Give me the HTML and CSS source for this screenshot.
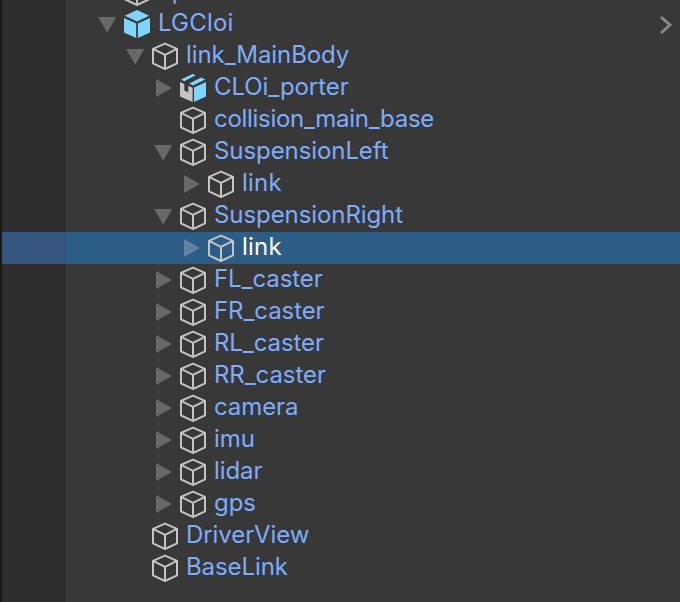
FILE: index.html
```html
<!DOCTYPE html>
<html lang="en">
<head>
<meta charset="utf-8">
<title>Hierarchy</title>
<link rel="stylesheet" href="styles.css">
</head>
<body>
<svg class="defs" aria-hidden="true">
  <symbol id="down" viewBox="0 0 24 32"><path d="M1.2 9H19.2L10.2 24.8Z"/></symbol>
  <symbol id="right" viewBox="0 0 24 32"><path d="M3 7V25L18.8 16Z"/></symbol>
  <symbol id="cube" viewBox="0 0 32 32"><path d="M16 3.7L28 8.8V23.4L16 29L4 23.4V8.8ZM4 8.8L16 14.9L28 8.8M16 14.9V29" fill="none" stroke="#c4c4c4" stroke-width="2" stroke-linejoin="round"/></symbol>
  <symbol id="prefab" viewBox="0 0 32 32"><path d="M16 2L28.2 7.8L16 13.4L3.8 7.8ZM3 10L15.2 15.6V30L3 24.6ZM29 10L16.9 15.6V30L29 24.6Z" fill="#7fd6fd"/></symbol>
  <symbol id="model" viewBox="0 0 32 32"><path d="M3 10L7.3 12V18.6L11.3 20.2V13.8L15.6 15.7V30L3 24.6Z" fill="#c4c4c4"/><path d="M29 10L17 15.6V30L29 24.6ZM4 7.6L15.6 2L18.7 3.3L7.3 9.2ZM12.2 11.6L24.3 5.6L28.3 7.6L16 13.4Z" fill="#7fd6fd"/></symbol>
</svg>
<main class="tree">
  <div class="row l0"><svg class="arrow"></svg><svg class="icon"><use href="#cube"/></svg><span>cp</span></div>
  <div class="row l0"><svg class="arrow"><use href="#down"/></svg><svg class="icon"><use href="#prefab"/></svg><span class="wide">LGCloi</span><svg class="chevron" viewBox="0 0 16 24"><path d="M3 4L12 12L3 20"/></svg></div>
  <div class="row l1"><svg class="arrow"><use href="#down"/></svg><svg class="icon"><use href="#cube"/></svg><span>link_MainBody</span></div>
  <div class="row l2"><svg class="arrow"><use href="#right"/></svg><svg class="icon"><use href="#model"/></svg><span>CLOi_porter</span></div>
  <div class="row l2"><svg class="arrow"></svg><svg class="icon"><use href="#cube"/></svg><span class="tight">collision_main_base</span></div>
  <div class="row l2"><svg class="arrow"><use href="#down"/></svg><svg class="icon"><use href="#cube"/></svg><span>SuspensionLeft</span></div>
  <div class="row l3"><svg class="arrow"><use href="#right"/></svg><svg class="icon"><use href="#cube"/></svg><span class="wide">link</span></div>
  <div class="row l2"><svg class="arrow"><use href="#down"/></svg><svg class="icon"><use href="#cube"/></svg><span>SuspensionRight</span></div>
  <div class="row l3 selected"><svg class="arrow"><use href="#right"/></svg><svg class="icon"><use href="#cube"/></svg><span class="wide">link</span></div>
  <div class="row l2"><svg class="arrow"><use href="#right"/></svg><svg class="icon"><use href="#cube"/></svg><span>FL_caster</span></div>
  <div class="row l2"><svg class="arrow"><use href="#right"/></svg><svg class="icon"><use href="#cube"/></svg><span>FR_caster</span></div>
  <div class="row l2"><svg class="arrow"><use href="#right"/></svg><svg class="icon"><use href="#cube"/></svg><span>RL_caster</span></div>
  <div class="row l2"><svg class="arrow"><use href="#right"/></svg><svg class="icon"><use href="#cube"/></svg><span>RR_caster</span></div>
  <div class="row l2"><svg class="arrow"><use href="#right"/></svg><svg class="icon"><use href="#cube"/></svg><span>camera</span></div>
  <div class="row l2"><svg class="arrow"><use href="#right"/></svg><svg class="icon"><use href="#cube"/></svg><span>imu</span></div>
  <div class="row l2"><svg class="arrow"><use href="#right"/></svg><svg class="icon"><use href="#cube"/></svg><span>lidar</span></div>
  <div class="row l2"><svg class="arrow"><use href="#right"/></svg><svg class="icon"><use href="#cube"/></svg><span>gps</span></div>
  <div class="row l1"><svg class="arrow"></svg><svg class="icon"><use href="#cube"/></svg><span>DriverView</span></div>
  <div class="row l1"><svg class="arrow"></svg><svg class="icon"><use href="#cube"/></svg><span>BaseLink</span></div>
</main>
</body>
</html>
```
FILE: styles.css
```css
body {
  margin: 0;
  height: 602px;
  overflow: hidden;
  background: #383838;
  font: 24px/32px Inter, "Liberation Sans", sans-serif;
  color: #7fadfb;
}

.defs {
  display: block;
  width: 0;
  height: 0;
}

.tree {
  box-sizing: border-box;
  height: 626px;
  margin-top: -24px;
  border-left: 2px solid #191919;
  background: linear-gradient(to right, #2d2d2d 64px, #383838 64px);
}

.row {
  display: flex;
  height: 32px;
  white-space: pre;
}

.row span {
  margin: -1px 0 1px 5px;
  letter-spacing: -0.08px;
}

.row .wide {
  letter-spacing: 0.2px;
}

.row .tight {
  letter-spacing: -0.3px;
}

.l0 { padding-left: 95px; }
.l1 { padding-left: 123px; }
.l2 { padding-left: 151px; }
.l3 { padding-left: 179px; }

.arrow {
  flex: none;
  width: 24px;
  height: 32px;
  fill: #686868;
}

.icon {
  flex: none;
  width: 32px;
  height: 32px;
}

.chevron {
  width: 16px;
  height: 24px;
  margin: 5px 6px 0 auto;
  fill: none;
  stroke: #888;
  stroke-width: 3;
}

.selected {
  background: linear-gradient(to right, #36557f 64px, #2c5d87 64px);
  color: #fff;
}

.selected .arrow {
  fill: #62839f;
}
```
